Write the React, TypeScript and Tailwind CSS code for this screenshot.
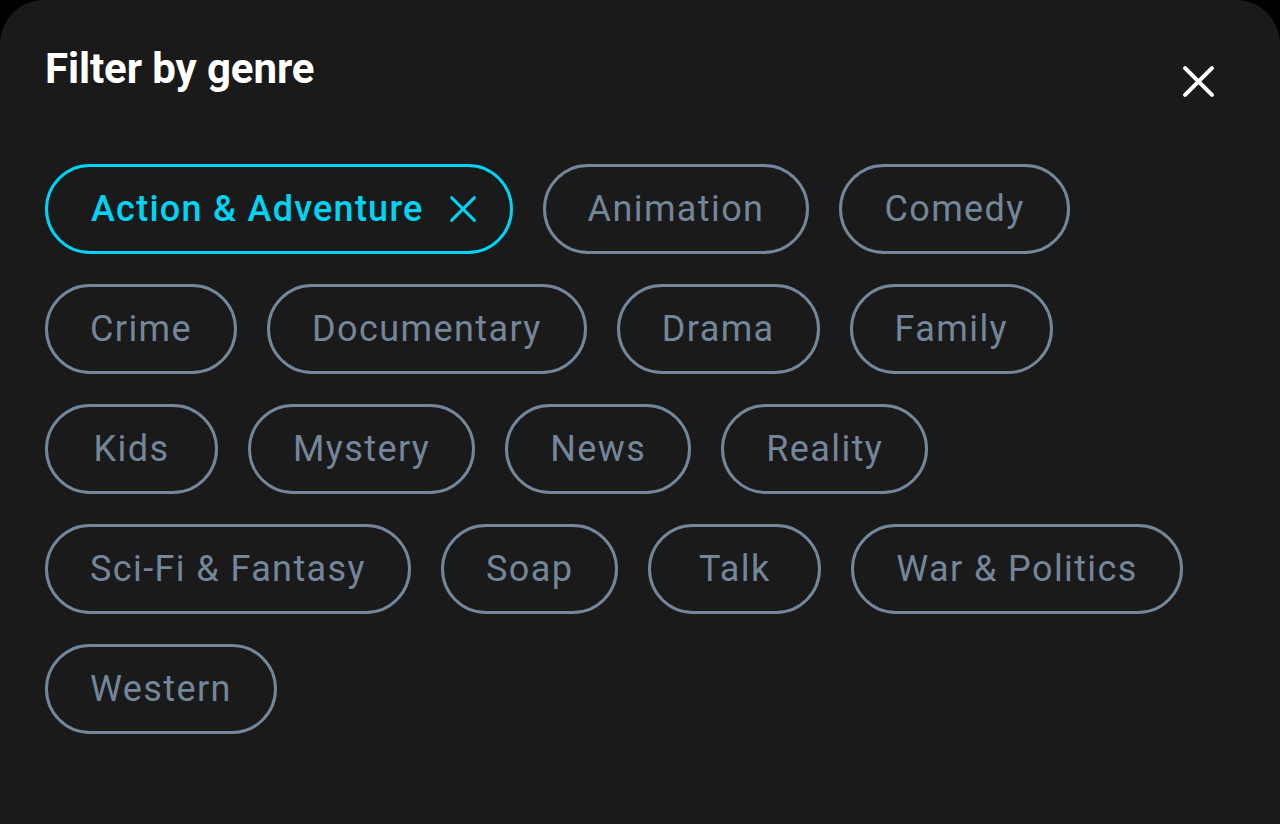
import React from "react";

const genres = [
  "Animation",
  "Comedy",
  "Crime",
  "Documentary",
  "Drama",
  "Family",
  "Kids",
  "Mystery",
  "News",
  "Reality",
  "Sci-Fi & Fantasy",
  "Soap",
  "Talk",
  "War & Politics",
  "Western",
];

function XIcon({ className, strokeWidth }: { className: string; strokeWidth: number }) {
  return (
    <svg viewBox="0 0 32 32" className={className} fill="none" stroke="currentColor" strokeWidth={strokeWidth} strokeLinecap="round">
      <path d="M3 3 L29 29 M29 3 L3 29" />
    </svg>
  );
}

export default function App() {
  return (
    <div className="w-[1280px] h-[824px] bg-black overflow-hidden" style={{ fontFamily: "Roboto, 'Noto Sans', sans-serif" }}>
      <div className="w-full h-full bg-[#1a1a1a] rounded-t-[44px] pl-[45px] pr-[65px] pt-[44px]">
        <div className="flex items-start justify-between">
          <h1 className="text-[42px] leading-[50px] font-bold text-white tracking-[-0.1px]">Filter by genre</h1>
          <button className="mt-[20px] w-[33px] h-[35px] text-white">
            <XIcon className="w-[33px] h-[35px]" strokeWidth={4} />
          </button>
        </div>
        <div className="mt-[65px] flex flex-wrap gap-[30px] pr-[20px]">
          <div className="h-[90px] rounded-full border-[3px] border-[#00d4f5] pl-[43px] pr-[33px] flex items-center text-[#00d4f5]">
            <span className="text-[36px] font-medium tracking-[1.25px]">Action &amp; Adventure</span>
            <XIcon className="ml-[25px] w-[28px] h-[28px]" strokeWidth={3.4} />
          </div>
          {genres.map((g) => (
            <div
              key={g}
              className="h-[90px] min-w-[173px] rounded-full border-[3px] border-[#74869a] px-[42px] flex items-center justify-center text-[#74869a]"
            >
              <span className="text-[36px] tracking-[1.4px]">{g}</span>
            </div>
          ))}
        </div>
      </div>
    </div>
  );
}
